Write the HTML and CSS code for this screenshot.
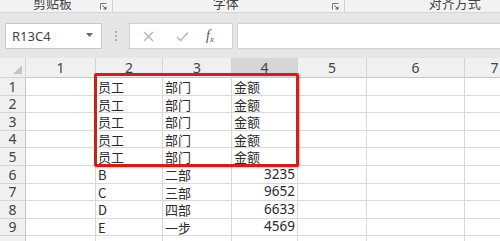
FILE: index.html
```html
<!DOCTYPE html>
<html>
<head>
<meta charset="utf-8">
<link rel="stylesheet" href="styles.css">
</head>
<body>
<div class="app">
  <div class="ribbon">
    <div class="group g1"><span class="glabel">剪贴板</span><svg class="launch" width="7" height="7" viewBox="0 0 7 7"><path d="M0.5 6.5V0.5H6.5" fill="none" stroke="#777" stroke-width="1"/><path d="M2.5 2.5L6 6M6 3.5V6H3.5" fill="none" stroke="#555" stroke-width="1"/></svg></div>
    <div class="group g2"><span class="glabel">字体</span><svg class="launch" width="7" height="7" viewBox="0 0 7 7"><path d="M0.5 6.5V0.5H6.5" fill="none" stroke="#777" stroke-width="1"/><path d="M2.5 2.5L6 6M6 3.5V6H3.5" fill="none" stroke="#555" stroke-width="1"/></svg></div>
    <div class="group g3"><span class="glabel">对齐方式</span></div>
  </div>
  <div class="fbar">
    <div class="namebox"><span class="ref">R13C4</span><svg class="dd" width="7" height="4" viewBox="0 0 7 4"><path d="M0 0H7L3.5 4Z" fill="#666"/></svg></div>
    <div class="grip"><i></i><i></i><i></i></div>
    <div class="fbtns">
      <svg width="11" height="11" viewBox="0 0 11 11"><path d="M1 1L10 10M10 1L1 10" stroke="#b5b5b5" stroke-width="1.4"/></svg>
      <svg width="13" height="11" viewBox="0 0 13 11"><path d="M1 6L4.5 9.5L12 1.5" fill="none" stroke="#b5b5b5" stroke-width="1.5"/></svg>
      <span class="fx">f<sub>x</sub></span>
    </div>
    <div class="finput"></div>
  </div>
  <div class="sheet">
    <div class="grid">
      <div class="h corner"><svg width="9" height="9" viewBox="0 0 9 9"><path d="M9 0V9H0Z" fill="#c4c4c4"/></svg></div>
      <div class="h col">1</div><div class="h col">2</div><div class="h col">3</div><div class="h col sel">4</div><div class="h col">5</div><div class="h col">6</div><div class="h col">7</div>

      <div class="h row">1</div><div class="c"></div><div class="c">员工</div><div class="c">部门</div><div class="c">金额</div><div class="c"></div><div class="c"></div><div class="c"></div>
      <div class="h row">2</div><div class="c"></div><div class="c">员工</div><div class="c">部门</div><div class="c">金额</div><div class="c"></div><div class="c"></div><div class="c"></div>
      <div class="h row">3</div><div class="c"></div><div class="c">员工</div><div class="c">部门</div><div class="c">金额</div><div class="c"></div><div class="c"></div><div class="c"></div>
      <div class="h row">4</div><div class="c"></div><div class="c">员工</div><div class="c">部门</div><div class="c">金额</div><div class="c"></div><div class="c"></div><div class="c"></div>
      <div class="h row">5</div><div class="c"></div><div class="c">员工</div><div class="c">部门</div><div class="c">金额</div><div class="c"></div><div class="c"></div><div class="c"></div>
      <div class="h row">6</div><div class="c"></div><div class="c">B</div><div class="c">二部</div><div class="c num">3235</div><div class="c"></div><div class="c"></div><div class="c"></div>
      <div class="h row">7</div><div class="c"></div><div class="c">C</div><div class="c">三部</div><div class="c num">9652</div><div class="c"></div><div class="c"></div><div class="c"></div>
      <div class="h row">8</div><div class="c"></div><div class="c">D</div><div class="c">四部</div><div class="c num">6633</div><div class="c"></div><div class="c"></div><div class="c"></div>
      <div class="h row">9</div><div class="c"></div><div class="c">E</div><div class="c">一步</div><div class="c num">4569</div><div class="c"></div><div class="c"></div><div class="c"></div>
      <div class="h row"></div><div class="c"></div><div class="c"></div><div class="c"></div><div class="c"></div><div class="c"></div><div class="c"></div><div class="c"></div>
    </div>
    <div class="mark"></div>
  </div>
</div>
</body>
</html>
```
FILE: styles.css
```css
html, body {
  margin: 0;
  padding: 0;
}
body {
  width: 500px;
  height: 241px;
  overflow: hidden;
  background: #e6e6e6;
  font-family: "Noto Sans CJK SC", "Noto Sans", sans-serif;
  color: #333;
}
.app {
  width: 500px;
  height: 241px;
  overflow: hidden;
  position: relative;
}
.ribbon {
  height: 12px;
  background: #f3f3f3;
  border-bottom: 1px solid #d6d6d6;
  display: flex;
  overflow: hidden;
}
.group {
  position: relative;
  height: 12px;
  display: flex;
  align-items: flex-end;
  border-right: 1px solid #d2d2d2;
  box-sizing: border-box;
}
.glabel {
  font-size: 13px;
  line-height: 13px;
  color: #444;
  margin-bottom: 3px;
  white-space: nowrap;
}
.g1 { width: 118px; padding-left: 33px; }
.g2 { width: 241px; padding-left: 100px; }
.g3 { width: 160px; padding-left: 84px; border-right: none; }
.launch {
  position: absolute;
  top: 3px;
  right: 5px;
}
.fbar {
  height: 37px;
  display: flex;
  align-items: flex-start;
  padding-top: 10px;
  box-sizing: border-box;
  background: #e6e6e6;
}
.namebox {
  margin-left: 5px;
  width: 97px;
  height: 26px;
  background: #fff;
  border: 1px solid #c6c6c6;
  box-sizing: border-box;
  display: flex;
  align-items: center;
  justify-content: space-between;
  padding: 0 8px 0 6px;
}
.ref {
  font-size: 13px;
  color: #444;
  font-family: "Noto Sans", sans-serif;
}
.dd { margin-top: -2px; }
.grip {
  width: 27px;
  height: 26px;
  display: flex;
  flex-direction: column;
  align-items: center;
  justify-content: center;
  gap: 2px;
}
.grip i {
  width: 2px;
  height: 2px;
  background: #b0b0b0;
}
.fbtns {
  width: 104px;
  height: 26px;
  background: #fff;
  border: 1px solid #d0d0d0;
  box-sizing: border-box;
  display: flex;
  align-items: center;
  padding-left: 13px;
}
.fbtns svg:first-child { margin-right: 22px; }
.fbtns svg:nth-child(2) { margin-right: 17px; }
.fx {
  font-family: "Liberation Serif", serif;
  font-style: italic;
  font-size: 14px;
  color: #555;
  line-height: 1;
}
.fx sub { font-size: 9px; vertical-align: -2px; }
.finput {
  margin-left: 4px;
  flex: 1;
  height: 26px;
  background: #fff;
  border: 1px solid #d0d0d0;
  border-right: none;
  box-sizing: border-box;
}
.sheet {
  position: relative;
  margin-top: 8px;
}
.grid {
  display: grid;
  grid-template-columns: 26px 70px 67px 69px 66px 69px 98px 60px;
  grid-template-rows: 20px 18px 17px 18px 17px 18px 18px 17px 18px 17px 18px;
  width: 543px;
  background: #fff;
}
.h {
  background: #f0f0f0;
  border-right: 1px solid #d4d4d4;
  border-bottom: 1px solid #d4d4d4;
  box-sizing: border-box;
  font-family: "Noto Sans", sans-serif;
  font-size: 14px;
  color: #444;
  display: flex;
  align-items: center;
  justify-content: center;
  line-height: 1;
  overflow: hidden;
}
.corner {
  justify-content: flex-end;
  align-items: flex-end;
  padding: 0 3px 3px 0;
}
.col { border-bottom: 1px solid #c6c6c6; }
.col.sel { background: #d6d6d6; }
.row { border-right: 1px solid #c6c6c6; }
.c {
  border-right: 1px solid #d9d9d9;
  border-bottom: 1px solid #d9d9d9;
  box-sizing: border-box;
  font-size: 13px;
  color: #2a2a2a;
  display: flex;
  align-items: center;
  padding-left: 2px;
  line-height: 1;
  white-space: nowrap;
  overflow: hidden;
}
.c.num {
  justify-content: flex-end;
  padding-right: 2px;
  font-family: "Noto Sans", sans-serif;
  font-size: 13.5px;
}
.mark {
  position: absolute;
  left: 94px;
  top: 15px;
  width: 205px;
  height: 94px;
  border: 3px solid #cc1f1f;
  border-radius: 2px;
  box-sizing: border-box;
  box-shadow: 1px 1px 2px rgba(120, 0, 0, 0.35);
}
```
